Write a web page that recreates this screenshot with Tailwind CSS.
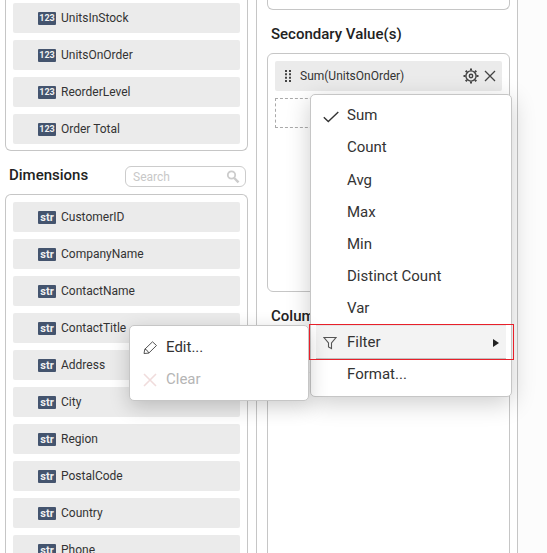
<!DOCTYPE html>
<html lang="en">
<head>
<meta charset="utf-8">
<title>Data binding</title>
<script src="https://cdn.jsdelivr.net/npm/@tailwindcss/browser@4"></script>
</head>
<body class="bg-[#fcfcfc] font-['Roboto',sans-serif] text-[#333]">
<div class="grid h-screen grid-cols-[257fr_261fr_29fr] overflow-hidden">

  <section class="flex min-w-0 flex-col border-r border-[#c6c6c6] bg-white pr-2 pl-[5px]">
    <ul class="flex flex-col gap-[7px] rounded-b-md border border-t-0 border-[#c6c6c6] px-[7px] pt-[3px] pb-[6px] text-xs">
      <li class="flex h-[30px] shrink-0 items-center gap-[5px] rounded-xs bg-[#ebebeb] pl-[25px]"><span class="flex h-[13px] w-[18px] items-center justify-center rounded-[1px] bg-[#44546e] text-[9px] font-bold text-[#f0f0f0]">123</span>UnitsInStock</li>
      <li class="flex h-[30px] shrink-0 items-center gap-[5px] rounded-xs bg-[#ebebeb] pl-[25px]"><span class="flex h-[13px] w-[18px] items-center justify-center rounded-[1px] bg-[#44546e] text-[9px] font-bold text-[#f0f0f0]">123</span>UnitsOnOrder</li>
      <li class="flex h-[30px] shrink-0 items-center gap-[5px] rounded-xs bg-[#ebebeb] pl-[25px]"><span class="flex h-[13px] w-[18px] items-center justify-center rounded-[1px] bg-[#44546e] text-[9px] font-bold text-[#f0f0f0]">123</span>ReorderLevel</li>
      <li class="flex h-[30px] shrink-0 items-center gap-[5px] rounded-xs bg-[#ebebeb] pl-[25px]"><span class="flex h-[13px] w-[18px] items-center justify-center rounded-[1px] bg-[#44546e] text-[9px] font-bold text-[#f0f0f0]">123</span>Order Total</li>
    </ul>
    <div class="flex items-start justify-between pt-[15px] pr-[2px] pb-[7px] pl-1">
      <h2 class="text-[15px] leading-[18px] font-medium text-[#222]">Dimensions</h2>
      <label class="flex h-[21px] w-[121px] items-center rounded-md border border-[#ccc] pr-[5px] pl-[7px]">
        <input type="search" aria-label="Search dimensions" placeholder="Search" class="min-w-0 flex-1 text-xs outline-none placeholder:text-[#c8c8c8]">
        <svg class="size-[14px]" viewBox="0 0 14 14" fill="none" stroke="#ccc" aria-hidden="true"><circle cx="5.5" cy="5" r="3.7" stroke-width="1.8"/><path d="M8.2 8l4.3 4.4" stroke-width="2.4"/></svg>
      </label>
    </div>
    <ul class="flex flex-col gap-[7px] rounded-t-md border border-b-0 border-[#c6c6c6] px-[7px] py-[7px] text-xs">
      <li class="flex h-[30px] shrink-0 items-center gap-[5px] rounded-xs bg-[#ebebeb] pl-[25px]"><span class="flex h-[13px] w-[18px] items-center justify-center rounded-[1px] bg-[#44546e] text-[11px] leading-[13px] font-bold text-[#f0f0f0]">str</span>CustomerID</li>
      <li class="flex h-[30px] shrink-0 items-center gap-[5px] rounded-xs bg-[#ebebeb] pl-[25px]"><span class="flex h-[13px] w-[18px] items-center justify-center rounded-[1px] bg-[#44546e] text-[11px] leading-[13px] font-bold text-[#f0f0f0]">str</span>CompanyName</li>
      <li class="flex h-[30px] shrink-0 items-center gap-[5px] rounded-xs bg-[#ebebeb] pl-[25px]"><span class="flex h-[13px] w-[18px] items-center justify-center rounded-[1px] bg-[#44546e] text-[11px] leading-[13px] font-bold text-[#f0f0f0]">str</span>ContactName</li>
      <li class="flex h-[30px] shrink-0 items-center gap-[5px] rounded-xs bg-[#ebebeb] pl-[25px]"><span class="flex h-[13px] w-[18px] items-center justify-center rounded-[1px] bg-[#44546e] text-[11px] leading-[13px] font-bold text-[#f0f0f0]">str</span>ContactTitle</li>
      <li class="flex h-[30px] shrink-0 items-center gap-[5px] rounded-xs bg-[#ebebeb] pl-[25px]"><span class="flex h-[13px] w-[18px] items-center justify-center rounded-[1px] bg-[#44546e] text-[11px] leading-[13px] font-bold text-[#f0f0f0]">str</span>Address</li>
      <li class="flex h-[30px] shrink-0 items-center gap-[5px] rounded-xs bg-[#ebebeb] pl-[25px]"><span class="flex h-[13px] w-[18px] items-center justify-center rounded-[1px] bg-[#44546e] text-[11px] leading-[13px] font-bold text-[#f0f0f0]">str</span>City</li>
      <li class="flex h-[30px] shrink-0 items-center gap-[5px] rounded-xs bg-[#ebebeb] pl-[25px]"><span class="flex h-[13px] w-[18px] items-center justify-center rounded-[1px] bg-[#44546e] text-[11px] leading-[13px] font-bold text-[#f0f0f0]">str</span>Region</li>
      <li class="flex h-[30px] shrink-0 items-center gap-[5px] rounded-xs bg-[#ebebeb] pl-[25px]"><span class="flex h-[13px] w-[18px] items-center justify-center rounded-[1px] bg-[#44546e] text-[11px] leading-[13px] font-bold text-[#f0f0f0]">str</span>PostalCode</li>
      <li class="flex h-[30px] shrink-0 items-center gap-[5px] rounded-xs bg-[#ebebeb] pl-[25px]"><span class="flex h-[13px] w-[18px] items-center justify-center rounded-[1px] bg-[#44546e] text-[11px] leading-[13px] font-bold text-[#f0f0f0]">str</span>Country</li>
      <li class="flex h-[30px] shrink-0 items-center gap-[5px] rounded-xs bg-[#ebebeb] pl-[25px]"><span class="flex h-[13px] w-[18px] items-center justify-center rounded-[1px] bg-[#44546e] text-[11px] leading-[13px] font-bold text-[#f0f0f0]">str</span>Phone</li>
    </ul>
  </section>

  <section class="flex min-w-0 flex-col border-r border-[#c6c6c6] bg-white pr-[7px] pl-[10px]">
    <div class="h-[10px] shrink-0 rounded-b-md border border-t-0 border-[#c6c6c6]"></div>
    <h2 class="pt-[15px] pb-[10px] pl-1 text-[15px] leading-[18px] font-medium text-[#222]">Secondary Value(s)</h2>
    <div class="flex min-h-[239px] flex-col gap-[7px] rounded-md border border-[#c6c6c6] p-[7px]">
      <div class="relative z-10 flex h-[30px] items-center rounded-xs bg-[#ebebeb] pr-[6px] pl-[9px] text-xs">
        <svg class="mr-[9px] h-[12px] w-[7px]" viewBox="0 0 7 12" fill="#444" aria-hidden="true"><path d="M1 0h2v2H1zM5 0h2v2H5zM1 3.300h2v2H1zM5 3.300h2v2H5zM1 6.700h2v2H1zM5 6.700h2v2H5zM1 10h2v2H1zM5 10h2v2H5z"/></svg>
        <span class="flex-1">Sum(UnitsOnOrder)</span>
        <button type="button" aria-label="Settings" aria-haspopup="menu" aria-expanded="true" class="mr-[5px]">
          <svg class="size-4" viewBox="0 0 16 16" fill="none" stroke="#444"><circle cx="8" cy="8" r="5.1" stroke-width="1.4"/><circle cx="8" cy="8" r="1.7" stroke-width="1.4"/><path d="M8 .5v2M8 13.500v2M.5 8h2M13.500 8h2M2.700 2.700l1.400 1.400M11.900 11.900l1.400 1.400M2.700 13.300l1.400-1.400M11.900 4.100l1.400-1.400" stroke-width="2"/></svg>
        </button>
        <button type="button" aria-label="Remove">
          <svg class="size-3" viewBox="0 0 12 12" fill="none" stroke="#444" stroke-width="1.3"><path d="M1 1l10 10M11 1L1 11"/></svg>
        </button>

        <div role="menu" aria-label="Value options" class="absolute top-[33px] left-[35px] flex w-[202px] flex-col rounded-[5px] border border-[#c6c6c6] bg-white px-[5px] py-[5px] text-[15px] shadow-[0_6px_24px_rgba(0,0,0,0.2)]">
          <button role="menuitem" type="button" class="flex h-8 items-center pl-[7px] text-left">
            <svg class="mr-[8px] h-4 w-4" viewBox="0 0 16 16" fill="none" stroke="#333" stroke-width="1.4" aria-hidden="true"><path d="M.8 9.300l4.500 4.200L15.300 4"/></svg>Sum</button>
          <button role="menuitem" type="button" class="h-8 pl-[31px] text-left">Count</button>
          <button role="menuitem" type="button" class="mt-px h-8 pl-[31px] text-left">Avg</button>
          <button role="menuitem" type="button" class="h-8 pl-[31px] text-left">Max</button>
          <button role="menuitem" type="button" class="h-8 pl-[31px] text-left">Min</button>
          <button role="menuitem" type="button" class="h-8 pl-[31px] text-left">Distinct Count</button>
          <button role="menuitem" type="button" class="h-8 pl-[31px] text-left">Var</button>
          <div class="relative">
            <button role="menuitem" type="button" aria-haspopup="menu" aria-expanded="true" class="flex h-[34px] w-full items-center border-t border-b border-t-[#e4e4e4] border-b-[#c0c0c0] bg-[#f3f3f3] pt-px pr-[7px] pl-[7px] text-left">
              <svg class="mr-[10px] size-[14px]" viewBox="0 0 14 14" fill="none" stroke="#555" stroke-width="1.1" aria-hidden="true"><path d="M1 1.500h12L8.500 7v5.500L5.500 11V7z"/></svg>
              <span class="flex-1">Filter</span>
              <svg class="h-2 w-[6px]" viewBox="0 0 6 8" fill="#222" aria-hidden="true"><path d="M0 0l6 4-6 4z"/></svg>
            </button>
            <div class="pointer-events-none absolute -top-px -right-2 -bottom-px -left-[7px] z-20 border border-[#e8202a]"></div>
            <div role="menu" aria-label="Filter" class="absolute top-0 right-full z-10 mr-[7px] flex w-[180px] flex-col rounded-[5px] border border-[#c6c6c6] bg-white pt-[6px] pb-1 shadow-[0_6px_20px_rgba(0,0,0,0.2)]">
              <button role="menuitem" type="button" class="flex h-8 items-center pl-[13px] text-left">
                <svg class="mr-[9px] size-[14px]" viewBox="0 0 14 14" fill="none" stroke="#555" stroke-width="1" stroke-linejoin="round" aria-hidden="true"><path d="M1 12.500l.8-4.300L9.500.8l4 3.700-7.700 7.600zM1.800 8.200q2.600.3 4 3.900"/></svg>Edit...</button>
              <button role="menuitem" type="button" disabled class="flex h-8 items-center pl-[13px] text-left text-[#b5b5b5]">
                <svg class="mr-[9px] size-[14px]" viewBox="0 0 14 14" fill="none" stroke="#f0dcdc" stroke-width="1.6" aria-hidden="true"><path d="M1 1l12 12M13 1L1 13"/></svg>Clear</button>
            </div>
          </div>
          <button role="menuitem" type="button" class="h-8 pl-[31px] text-left">Format...</button>
        </div>
      </div>
      <div class="h-[30px] border border-dashed border-[#aaa]"></div>
    </div>
    <h2 class="pt-[15px] pb-[10px] pl-1 text-[15px] leading-[18px] font-medium text-[#222]">Columns</h2>
    <div class="flex-1 rounded-t-md border border-b-0 border-[#c6c6c6] p-[7px]">
      <div class="h-[30px] border border-dashed border-[#aaa]"></div>
    </div>
  </section>

  <div></div>
</div>
</body>
</html>
